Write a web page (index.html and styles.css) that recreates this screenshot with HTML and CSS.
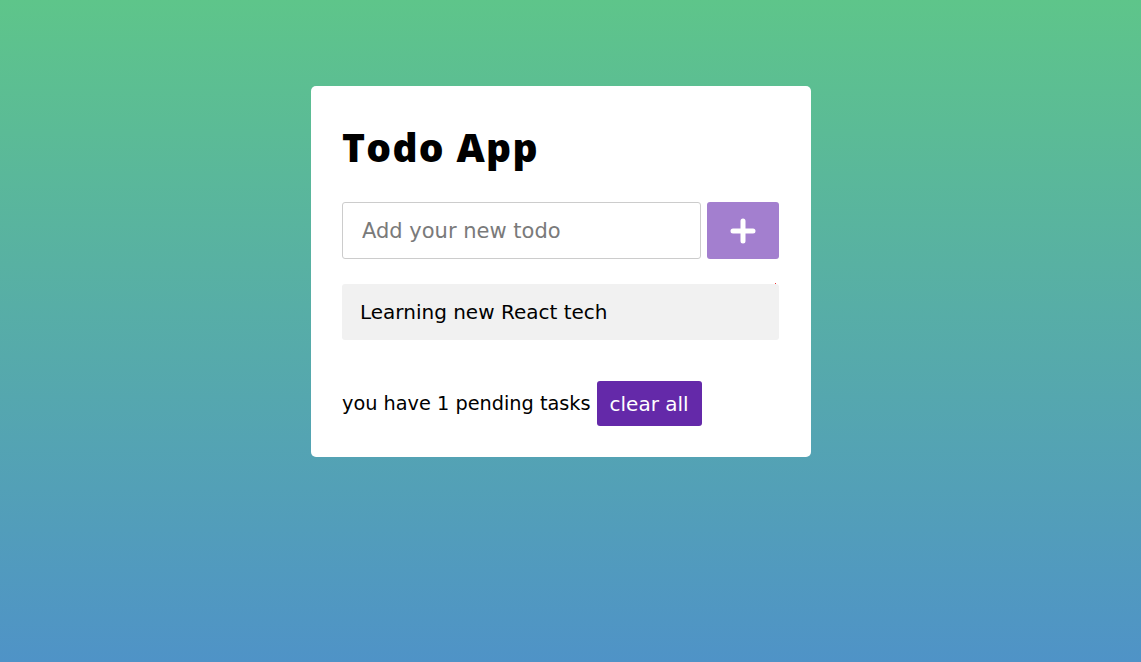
FILE: index.html
```html
<!DOCTYPE html>
<html>
<head>
<meta charset="utf-8">
<link rel="stylesheet" href="styles.css">
</head>
<body>
<div class="wrapper">
  <h1 class="title">Todo App</h1>
  <div class="input-row">
    <input class="todo-input" type="text" placeholder="Add your new todo">
    <button class="add-btn" aria-label="add">
      <svg width="26" height="26" viewBox="0 0 26 26"><path d="M13 3v20M3 13h20" stroke="#fff" stroke-width="5" stroke-linecap="round"/></svg>
    </button>
  </div>
  <ul class="todo-list">
    <li class="todo-item">Learning new React tech<span class="dot"></span></li>
  </ul>
  <div class="footer">
    <span class="pending">you have 1 pending tasks</span>
    <button class="clear-btn">clear all</button>
  </div>
</div>
</body>
</html>
```

FILE: styles.css
```css
* { box-sizing: border-box; margin: 0; padding: 0; }
html, body { height: 100%; }
body {
  font-family: "DejaVu Sans", "Open Sans", sans-serif;
  background: linear-gradient(to bottom, #5ec58a 0%, #4f93c7 100%);
  padding-top: 86px;
  padding-right: 19px;
}
.wrapper {
  width: 500px;
  margin: 0 auto;
  background: #fff;
  border-radius: 5px;
  padding: 34px 32px 31px 31px;
}
.title {
  font-family: "Open Sans", sans-serif;
  font-size: 39px;
  font-weight: 800;
  color: #000;
  line-height: 54px;
  letter-spacing: 1.3px;
}
.input-row {
  display: flex;
  gap: 6px;
  margin-top: 28px;
  height: 57px;
}
.todo-input {
  flex: 1;
  border: 1px solid #ccc;
  border-radius: 3px;
  padding: 0 19px;
  font-family: inherit;
  font-size: 21px;
  outline: none;
}
.todo-input::placeholder { color: #7a7a7a; }
.add-btn {
  width: 72px;
  border: none;
  border-radius: 3px;
  background: #a37fcf;
  display: flex;
  align-items: center;
  justify-content: center;
}
.todo-list { list-style: none; margin-top: 25px; }
.todo-item {
  position: relative;
  height: 56px;
  background: #f1f1f1;
  border-radius: 3px;
  padding: 0 18px;
  display: flex;
  align-items: center;
  font-size: 20px;
  color: #000;
}
.dot {
  position: absolute;
  right: 3px;
  top: -1px;
  width: 1px;
  height: 1px;
  background: #e33;
}
.footer {
  display: flex;
  align-items: center;
  gap: 6px;
  margin-top: 41px;
  font-size: 19.3px;
  color: #000;
}
.clear-btn {
  height: 45px;
  padding: 0 13px;
  border: none;
  border-radius: 3px;
  background: #6429a9;
  color: #fff;
  font-family: inherit;
  font-size: 20px;
}
```
